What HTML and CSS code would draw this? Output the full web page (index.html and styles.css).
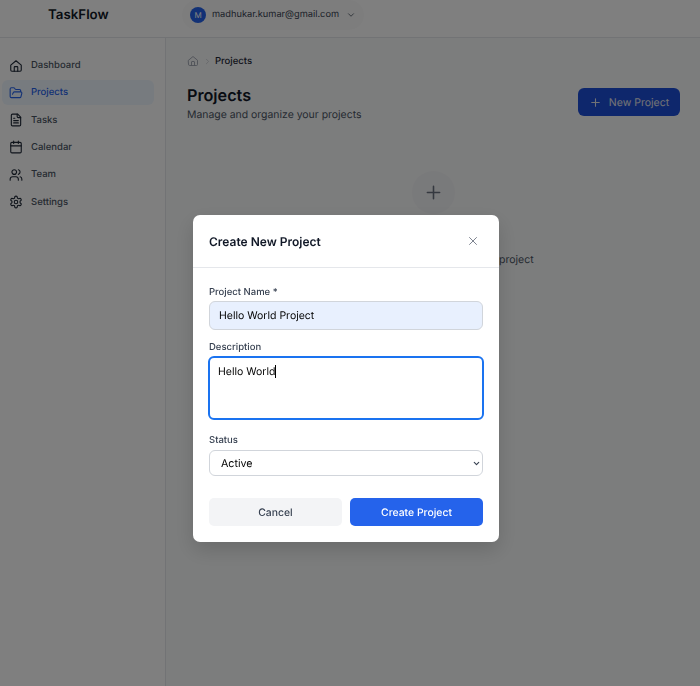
FILE: index.html
```html
<!DOCTYPE html>
<html lang="en">
<head>
<meta charset="utf-8">
<title>TaskFlow</title>
<link rel="stylesheet" href="styles.css">
</head>
<body>
<div class="app">
  <header class="topbar">
    <div class="logo">TaskFlow</div>
    <div class="user">
      <span class="avatar">M</span>
      <span class="email">madhukar.kumar@gmail.com</span>
      <svg class="chev" viewBox="0 0 24 24"><path d="M6 9l6 6 6-6"/></svg>
    </div>
  </header>
  <div class="body">
    <nav class="sidebar">
      <a class="nav-item"><svg class="ico" viewBox="0 0 24 24"><path d="M3 10.5 12 3l9 7.5V19a2 2 0 0 1-2 2H5a2 2 0 0 1-2-2z"/><path d="M9 21v-7a1 1 0 0 1 1-1h4a1 1 0 0 1 1 1v7"/></svg>Dashboard</a>
      <a class="nav-item active"><svg class="ico" viewBox="0 0 24 24"><path d="M6 14l1.5-2.9A2 2 0 0 1 9.24 10H20a2 2 0 0 1 1.94 2.5l-1.54 6a2 2 0 0 1-1.95 1.5H4a2 2 0 0 1-2-2V5a2 2 0 0 1 2-2h3.9a2 2 0 0 1 1.69.9l.81 1.2a2 2 0 0 0 1.67.9H18a2 2 0 0 1 2 2v2"/></svg>Projects</a>
      <a class="nav-item"><svg class="ico" viewBox="0 0 24 24"><path d="M15 2H6a2 2 0 0 0-2 2v16a2 2 0 0 0 2 2h12a2 2 0 0 0 2-2V7z"/><path d="M14 2v4a2 2 0 0 0 2 2h4"/><path d="M8 13h8M8 17h8M8 9h2"/></svg>Tasks</a>
      <a class="nav-item"><svg class="ico" viewBox="0 0 24 24"><path d="M8 2v4M16 2v4"/><rect x="3" y="4" width="18" height="18" rx="2"/><path d="M3 10h18"/></svg>Calendar</a>
      <a class="nav-item"><svg class="ico" viewBox="0 0 24 24"><path d="M16 21v-2a4 4 0 0 0-4-4H6a4 4 0 0 0-4 4v2"/><circle cx="9" cy="7" r="4"/><path d="M22 21v-2a4 4 0 0 0-3-3.87M16 3.13a4 4 0 0 1 0 7.75"/></svg>Team</a>
      <a class="nav-item"><svg class="ico" viewBox="0 0 24 24"><path d="M12.22 2h-.44a2 2 0 0 0-2 2v.18a2 2 0 0 1-1 1.73l-.43.25a2 2 0 0 1-2 0l-.15-.08a2 2 0 0 0-2.73.73l-.22.38a2 2 0 0 0 .73 2.73l.15.1a2 2 0 0 1 1 1.72v.51a2 2 0 0 1-1 1.74l-.15.09a2 2 0 0 0-.73 2.73l.22.38a2 2 0 0 0 2.73.73l.15-.08a2 2 0 0 1 2 0l.43.25a2 2 0 0 1 1 1.73V20a2 2 0 0 0 2 2h.44a2 2 0 0 0 2-2v-.18a2 2 0 0 1 1-1.73l.43-.25a2 2 0 0 1 2 0l.15.08a2 2 0 0 0 2.73-.73l.22-.39a2 2 0 0 0-.73-2.73l-.15-.08a2 2 0 0 1-1-1.74v-.5a2 2 0 0 1 1-1.74l.15-.09a2 2 0 0 0 .73-2.73l-.22-.38a2 2 0 0 0-2.73-.73l-.15.08a2 2 0 0 1-2 0l-.43-.25a2 2 0 0 1-1-1.73V4a2 2 0 0 0-2-2z"/><circle cx="12" cy="12" r="3"/></svg>Settings</a>
    </nav>
    <main class="main">
      <div class="crumbs">
        <svg class="crumb-home" viewBox="0 0 24 24"><path d="M3 10.5 12 3l9 7.5V19a2 2 0 0 1-2 2H5a2 2 0 0 1-2-2z"/><path d="M9 21v-7a1 1 0 0 1 1-1h4a1 1 0 0 1 1 1v7"/></svg>
        <svg class="crumb-sep" viewBox="0 0 24 24"><path d="M9 6l6 6-6 6"/></svg>
        <span class="crumb-cur">Projects</span>
      </div>
      <div class="page-head">
        <div>
          <h1 class="title">Projects</h1>
          <p class="sub">Manage and organize your projects</p>
        </div>
        <button class="new-btn"><svg class="plus-sm" viewBox="0 0 24 24"><path d="M12 5v14M5 12h14"/></svg>New Project</button>
      </div>
      <div class="empty">
        <div class="empty-circle"><svg class="plus-lg" viewBox="0 0 24 24"><path d="M12 5v14M5 12h14"/></svg></div>
        <h2 class="empty-title">No projects yet</h2>
        <p class="empty-text">Get started by creating your new project</p>
      </div>
    </main>
  </div>
</div>
<div class="overlay">
  <div class="modal">
    <div class="modal-head">
      <h2 class="modal-title">Create New Project</h2>
      <svg class="close" viewBox="0 0 24 24"><path d="M18 6 6 18M6 6l12 12"/></svg>
    </div>
    <form class="modal-body">
      <label class="lbl">Project Name *</label>
      <div class="input filled">Hello World Project</div>
      <label class="lbl lbl-desc">Description</label>
      <div class="textarea"><span class="typed">Hello World</span></div>
      <label class="lbl lbl-status">Status</label>
      <div class="select-wrap">
        <select class="select"><option>Active</option></select>
        <svg class="select-chev" viewBox="0 0 24 24"><path d="M6 9l6 6 6-6"/></svg>
      </div>
      <div class="actions">
        <button type="button" class="btn cancel">Cancel</button>
        <button type="button" class="btn create">Create Project</button>
      </div>
    </form>
  </div>
</div>
</body>
</html>
```
FILE: styles.css
```css
* { box-sizing: border-box; }
html, body { margin: 0; height: 100%; overflow: hidden; }
body { font-family: Inter, "Liberation Sans", sans-serif; background: #fff; color: #111827; text-rendering: geometricPrecision; }
svg { fill: none; stroke: currentColor; stroke-width: 2; stroke-linecap: round; stroke-linejoin: round; flex: none; }

.app { display: flex; flex-direction: column; height: 686px; }
.topbar { height: 38px; flex: none; display: flex; align-items: center; background: #fff; border-bottom: 1px solid #e5e7eb; }
.logo { width: 166px; padding-left: 48px; font-size: 13.3px; font-weight: 600; line-height: 30px; margin-top: -8px; color: #111827; }
.user { display: flex; align-items: center; height: 30px; margin-top: -8px; margin-left: 16px; padding: 0 8px; border-radius: 15px; background: #fbfbfb; font-size: 9.25px; color: #374151; }
.avatar { width: 16px; height: 16px; border-radius: 50%; background: #2563eb; color: #fff; font-size: 8px; display: flex; align-items: center; justify-content: center; margin-right: 6px; }
.chev { width: 10px; height: 10px; margin-left: 7px; color: #4b5563; }

.body { flex: 1; display: flex; min-height: 0; }
.sidebar { width: 166px; flex: none; padding: 15px 11px 0 2px; background: #fff; border-right: 1px solid #e5e7eb; display: flex; flex-direction: column; gap: 2.33px; }
.nav-item { height: 25px; display: flex; align-items: center; padding-left: 7px; gap: 8px; border-radius: 6px; font-size: 9.5px; font-weight: 500; color: #4b5563; }
.nav-item.active { background: #eff6ff; color: #2563eb; }
.ico { width: 14px; height: 14px; color: #1f2937; stroke-width: 1.9; }
.active .ico { color: #2563eb; }

.main { flex: 1; background: #f9fafb; padding: 16px 20px 0 21px; display: flex; flex-direction: column; min-width: 0; }
.crumbs { display: flex; align-items: center; height: 14px; font-size: 9.5px; }
.crumb-home { width: 12px; height: 12px; color: #9ca3af; stroke-width: 1.8; }
.crumb-sep { width: 9px; height: 9px; margin: 0 3px 0 4px; color: #c4c8ce; }
.crumb-cur { font-weight: 500; color: #1f2937; }
.page-head { display: flex; justify-content: space-between; align-items: center; margin-top: 16px; }
.title { margin: 0; font-size: 16.2px; line-height: 22px; font-weight: 600; color: #111827; }
.sub { margin: 1px 0 0; font-size: 10.45px; line-height: 16px; color: #4b5563; }
.new-btn { height: 28px; width: 102px; display: flex; align-items: center; justify-content: center; gap: 7px; margin: -3px 0 0; padding: 0; border: 1px solid transparent; border-radius: 6px; background: #1d4ed8; color: #e5e7eb; font: 400 10.5px Inter, sans-serif; text-rendering: geometricPrecision; }
.plus-sm { width: 13px; height: 13px; }
.empty { display: flex; flex-direction: column; align-items: center; margin-top: 48px; }
.empty-circle { width: 43px; height: 43px; border-radius: 50%; background: #f3f4f6; color: #6b7280; display: flex; align-items: center; justify-content: center; }
.plus-lg { width: 21px; height: 21px; stroke-width: 1.8; }
.empty-title { margin: 15px 0 0; font-size: 12px; line-height: 18px; font-weight: 500; }
.empty-text { margin: 5px 0 0; font-size: 10.5px; line-height: 16px; color: #4b5563; }

.overlay { position: fixed; inset: 0; background: rgba(0,0,0,.5); padding: 215px 0 0 193px; }
.modal { width: 306px; height: 327px; background: #fff; border-radius: 7px; box-shadow: 0 8px 20px rgba(0,0,0,.15); }
.modal-head { height: 53px; display: flex; align-items: center; justify-content: space-between; padding: 0 19px 0 16px; border-bottom: 1px solid #e5e7eb; }
.modal-title { margin: 0; font-size: 12px; font-weight: 600; color: #111827; }
.close { width: 14px; height: 14px; color: #6b7280; stroke-width: 1.5; }
.modal-body { padding: 18px 16px 0; display: flex; flex-direction: column; }
.lbl { font-size: 9.5px; line-height: 14px; font-weight: 500; color: #374151; }
.lbl-desc { margin-top: 11px; }
.lbl-status { margin-top: 14px; }
.input { height: 29px; margin-top: 1px; padding: 0 9px; display: flex; align-items: center; background: #e8f0fe; border: 1px solid #d1d5db; border-radius: 6px; font-size: 10.5px; color: #000; }
.textarea { height: 64px; margin-top: 1px; padding: 7px 8px; border: 2px solid #1a73f0; border-radius: 6px; margin-left: -1px; margin-right: -1px; font-size: 10.5px; line-height: 14px; color: #000; }
.typed { border-right: 1px solid #000; }
.select-wrap { position: relative; margin-top: 2px; display: flex; }
.select { appearance: none; height: 26px; width: 100%; padding: 0 11px; background: #fff; border: 1px solid #d1d5db; border-radius: 6px; font: 10.7px Inter, sans-serif; color: #000; text-rendering: geometricPrecision; }
.select-chev { position: absolute; right: 2px; top: 9px; width: 9px; height: 9px; color: #374151; stroke-width: 3; }
.actions { display: flex; gap: 8px; margin-top: 22px; }
.btn { flex: 1; height: 28px; border: 0; border-radius: 5px; font: 500 10.4px Inter, sans-serif; text-rendering: geometricPrecision; }
.cancel { background: #f3f4f6; color: #374151; }
.create { background: #2563eb; color: #fff; }
```
